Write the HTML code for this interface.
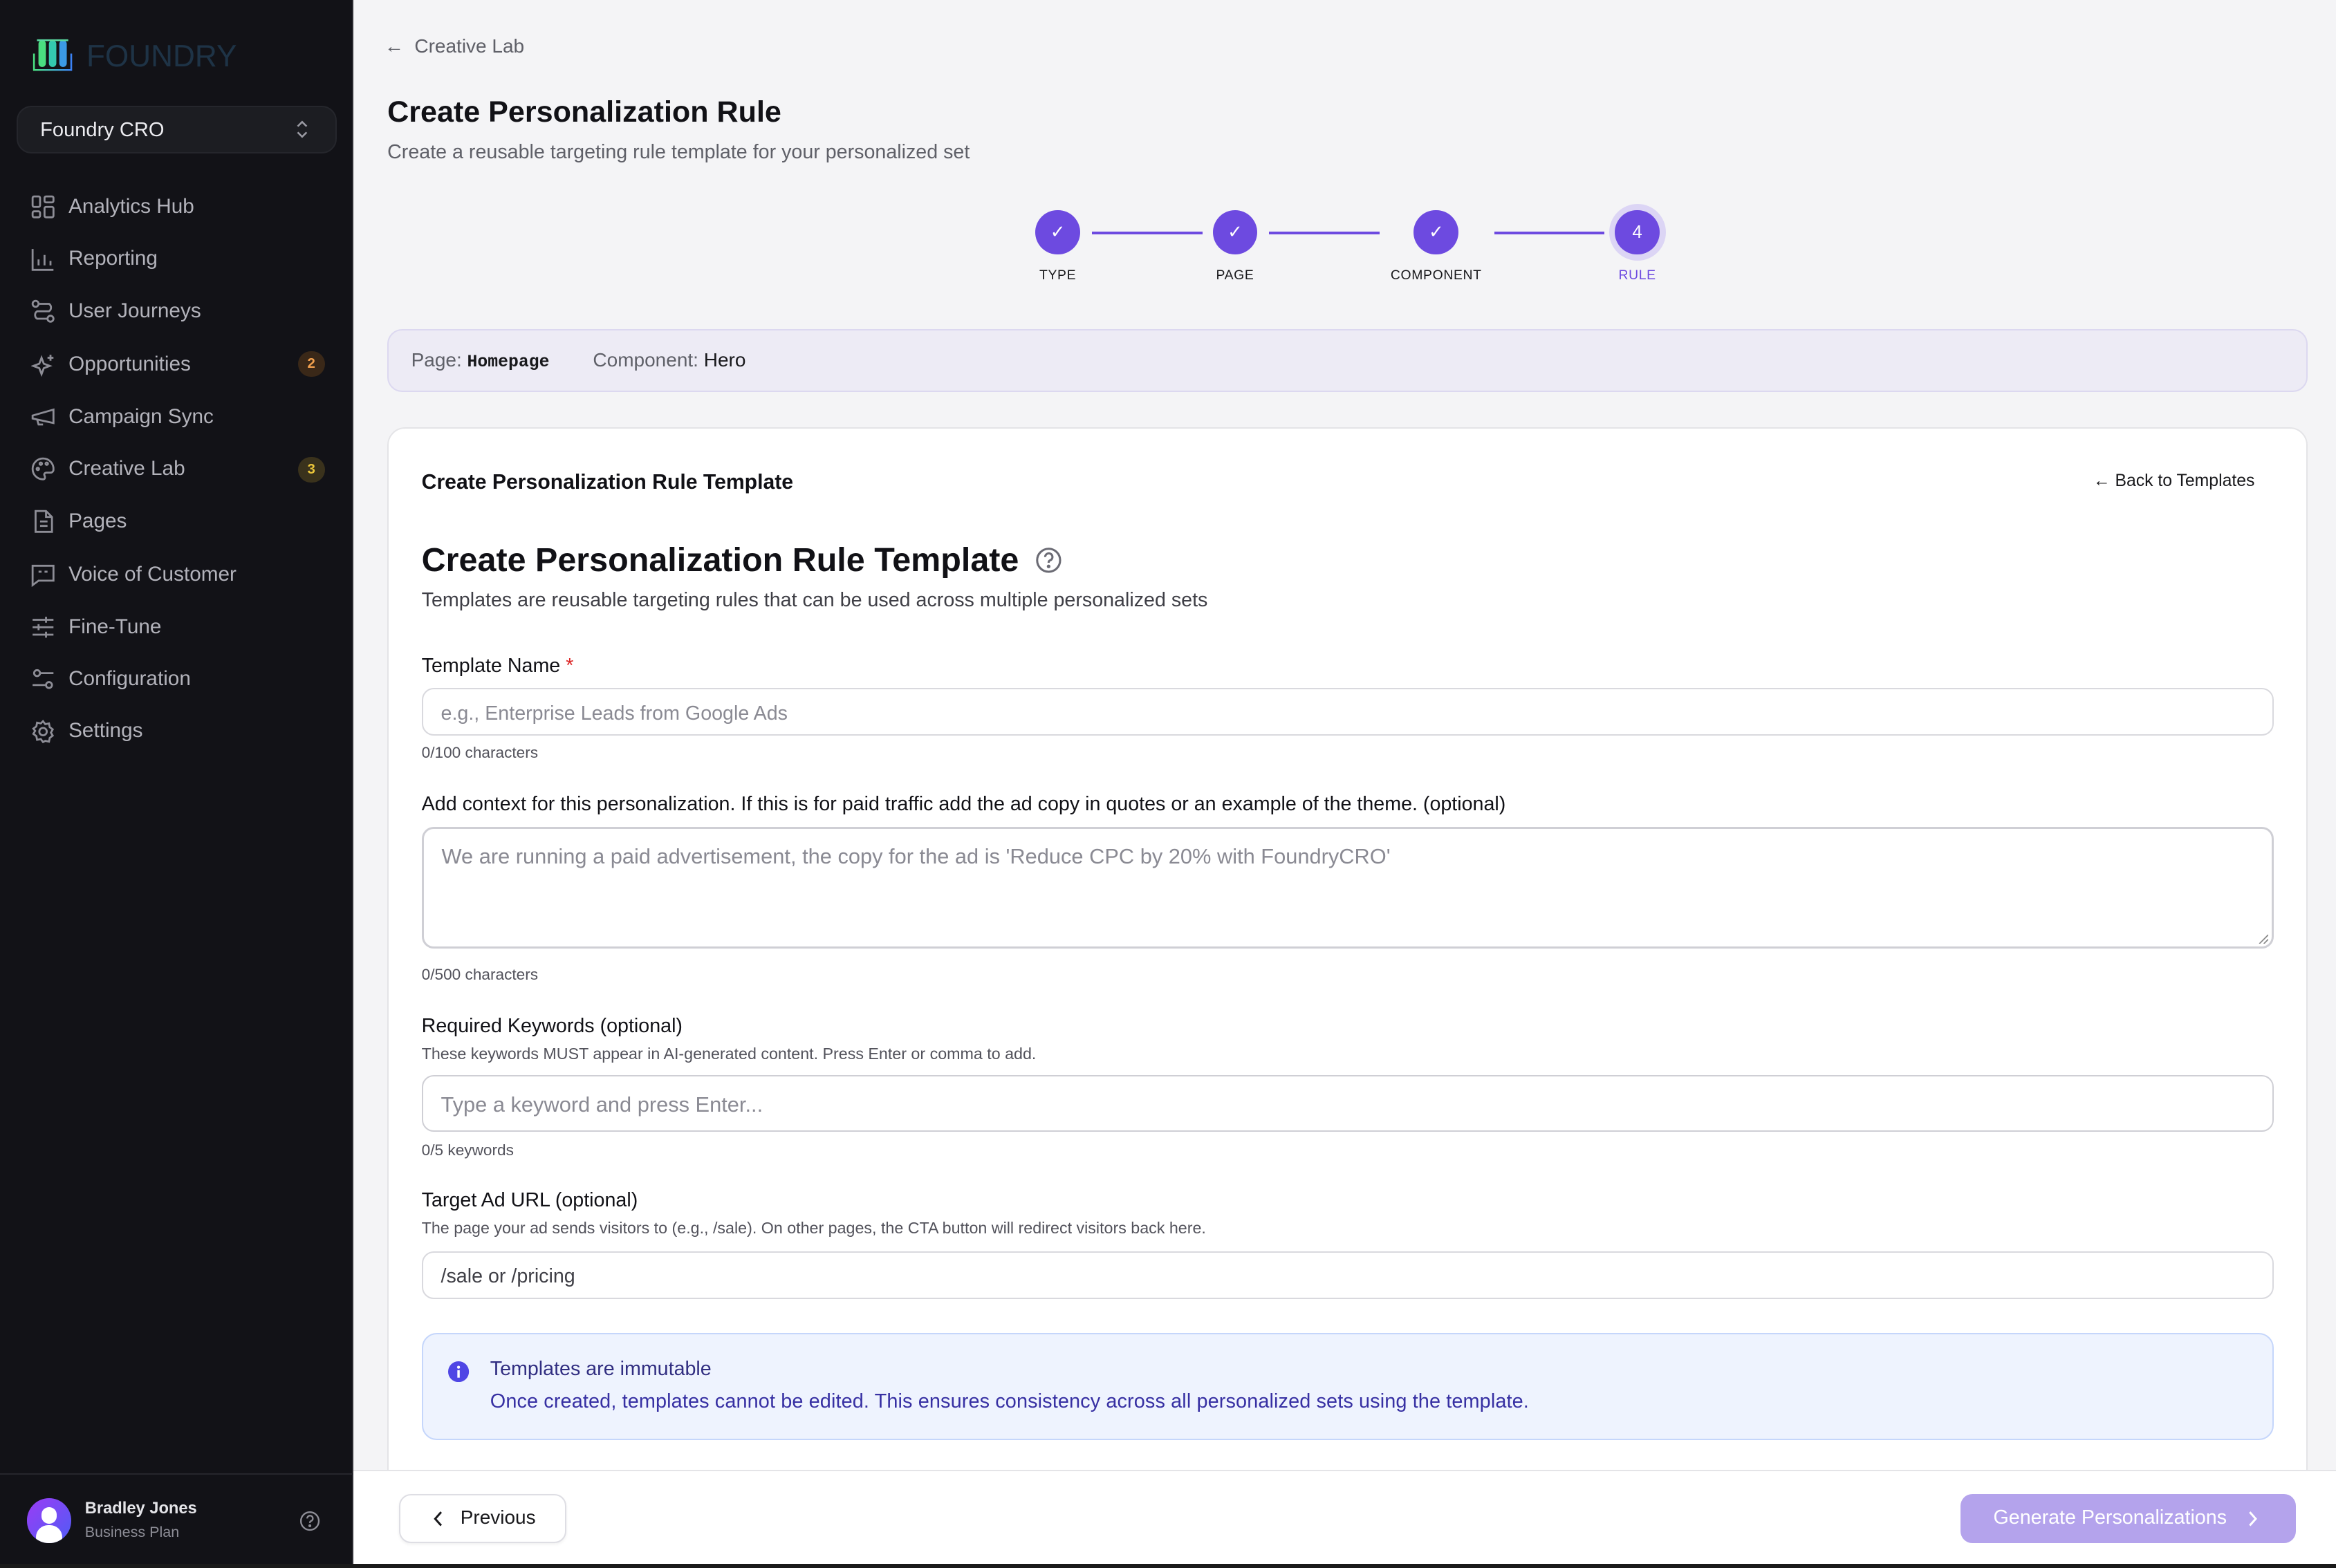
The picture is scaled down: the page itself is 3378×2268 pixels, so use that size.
<!DOCTYPE html>
<html><head><meta charset="utf-8">
<style>
*{box-sizing:border-box;margin:0;padding:0}
html,body{width:3378px;height:2268px;overflow:hidden;background:#f4f4f6}
#r{zoom:2.15434;width:1568px;height:1053px;position:relative;font-family:"Liberation Sans",sans-serif;color:#18181b;background:#f4f4f6;overflow:hidden}
.a{position:absolute;white-space:nowrap}
.sb{position:absolute;left:0;top:0;width:237px;height:1053px;background:#121217;border-right:1px solid #2a2a30}
.nav{position:absolute;left:46px;font-size:13.8px;color:#b3b3bb;line-height:18px}
.ic{position:absolute;left:21px;width:16px;height:16px}
.badge{position:absolute;left:200px;width:18px;height:17px;border-radius:9px;font-size:9.5px;text-align:center;line-height:17px;font-weight:bold}
.lbl{position:absolute;left:283px;font-size:13.3px;color:#111116;line-height:16px}
.hint{position:absolute;left:283px;font-size:10.8px;color:#52525b;line-height:13px}
.cnt{position:absolute;left:283px;font-size:10.5px;color:#52525b;line-height:13px}
.inp{position:absolute;left:283px;width:1243px;background:#fff;border:1px solid #d9d9de;border-radius:8px}
.ph{position:absolute;left:12px;color:#8a8a93}
.step{position:absolute;width:30px;height:30px;border-radius:50%;background:#6d4ae0;top:141px;color:#fff;text-align:center;line-height:30px;font-size:12px}
.sl{position:absolute;top:180px;font-size:9px;letter-spacing:.3px;line-height:10px;transform:translateX(-50%);color:#18181b}
.line{position:absolute;top:155.5px;height:2px;background:#6d4ae0}
</style></head><body><div id="r">

<div class="sb">
  <svg class="a" style="left:22px;top:26px" width="27" height="22" viewBox="0 0 27 22">
    <defs><linearGradient id="g" x1="0" x2="1"><stop offset="0" stop-color="#4ade80"/><stop offset="1" stop-color="#3b82f6"/></linearGradient></defs>
    <path d="M1 10v11h25V10" fill="none" stroke="url(#g)" stroke-width="1.2"/>
    <rect x="4" y="1" width="5" height="18" rx="2.5" fill="#4ade80"/>
    <rect x="11" y="1" width="5" height="18" rx="2.5" fill="#34c9b0"/>
    <rect x="18" y="1" width="5" height="18" rx="2.5" fill="#3b9ae6"/>
    <path d="M3 1h21" stroke="#5ad8a0" stroke-width="1.2"/>
  </svg>
  <div class="a" style="left:58px;top:26px;font-size:20.5px;color:#1e3346;line-height:24px">FOUNDRY</div>
  <div class="a" style="left:11px;top:71px;width:215px;height:32px;background:#1c1d22;border:1px solid #25262c;border-radius:10px"></div>
  <div class="a" style="left:27px;top:79px;font-size:13.5px;color:#ececf0;line-height:17px">Foundry CRO</div>
  <svg class="a" style="left:197px;top:80px" width="12" height="14" viewBox="0 0 12 14"><path d="M3 5l3-3 3 3M3 9l3 3 3-3" fill="none" stroke="#9a9aa3" stroke-width="1.2"/></svg>

  <svg class="ic" style="top:131px" viewBox="0 0 16 16" fill="none" stroke="#8d8d96" stroke-width="1.3"><rect x="1" y="1" width="5" height="7" rx="1"/><rect x="9" y="1" width="6" height="4" rx="1"/><rect x="1" y="11" width="5" height="4" rx="1"/><rect x="9" y="8" width="6" height="7" rx="1"/></svg>
  <div class="nav" style="top:130px">Analytics Hub</div>
  <svg class="ic" style="top:166px" viewBox="0 0 16 16" fill="none" stroke="#8d8d96" stroke-width="1.3"><path d="M1 1v14h14M5 12V8M9 12V5M13 12V9"/></svg>
  <div class="nav" style="top:165px">Reporting</div>
  <svg class="ic" style="top:201px" viewBox="0 0 16 16" fill="none" stroke="#8d8d96" stroke-width="1.3"><circle cx="3" cy="3" r="2"/><circle cx="13" cy="13" r="2"/><path d="M5 3h7a3 3 0 0 1 0 5H4a3 3 0 0 0 0 5h7"/></svg>
  <div class="nav" style="top:200px">User Journeys</div>
  <svg class="ic" style="top:237px" viewBox="0 0 16 16" fill="none" stroke="#8d8d96" stroke-width="1.3"><path d="M7 3l1.5 4 4 1.5-4 1.5L7 14l-1.5-4-4-1.5 4-1.5z"/><path d="M13 1v4M11 3h4"/></svg>
  <div class="nav" style="top:236px">Opportunities</div>
  <div class="badge" style="top:236px;background:#3a2818;color:#f2a04e">2</div>
  <svg class="ic" style="top:272px" viewBox="0 0 16 16" fill="none" stroke="#8d8d96" stroke-width="1.3"><path d="M1 7l14-4v9L1 9zM4 9.5L5 13h3"/></svg>
  <div class="nav" style="top:271px">Campaign Sync</div>
  <svg class="ic" style="top:307px" viewBox="0 0 16 16" fill="none" stroke="#8d8d96" stroke-width="1.3"><path d="M8 1a7 7 0 0 0 0 14c1.5 0 1.5-1.5 1-2.5s0-2 1.5-2H13a2 2 0 0 0 2-2A7 7 0 0 0 8 1z"/><circle cx="4.5" cy="8" r=".8"/><circle cx="6.5" cy="4.5" r=".8"/><circle cx="10.5" cy="4.5" r=".8"/></svg>
  <div class="nav" style="top:306px">Creative Lab</div>
  <div class="badge" style="top:307px;background:#3a321c;color:#ecc63a">3</div>
  <svg class="ic" style="top:342px" viewBox="0 0 16 16" fill="none" stroke="#8d8d96" stroke-width="1.3"><path d="M3 1h7l4 4v10H3zM10 1v4h4M6 8h5M6 11h5"/></svg>
  <div class="nav" style="top:341px">Pages</div>
  <svg class="ic" style="top:378px" viewBox="0 0 16 16" fill="none" stroke="#8d8d96" stroke-width="1.3"><path d="M1 2h14v10H5l-4 3zM5 6h2M9 6h2"/></svg>
  <div class="nav" style="top:377px">Voice of Customer</div>
  <svg class="ic" style="top:413px" viewBox="0 0 16 16" fill="none" stroke="#8d8d96" stroke-width="1.3"><path d="M1 3h14M1 8h14M1 13h14M10 1v4M5 6v4M10 11v4"/></svg>
  <div class="nav" style="top:412px">Fine-Tune</div>
  <svg class="ic" style="top:448px" viewBox="0 0 16 16" fill="none" stroke="#8d8d96" stroke-width="1.3"><circle cx="4" cy="4" r="2"/><circle cx="12" cy="12" r="2"/><path d="M6 4h9M1 12h9"/></svg>
  <div class="nav" style="top:447px">Configuration</div>
  <svg class="ic" style="top:483px" viewBox="0 0 16 16" fill="none" stroke="#8d8d96" stroke-width="1.3"><circle cx="8" cy="8" r="2.5"/><path d="M8 1l1.5 2 2.5-.5.5 2.5 2 1.5-1.2 2.2 1.2 2-2 1.5-.5 2.5-2.5-.5L8 15l-1.5-2-2.5.5-.5-2.5-2-1.5 1.2-2L1.5 6l2-1.5.5-2.5 2.5.5z"/></svg>
  <div class="nav" style="top:482px">Settings</div>

  <div class="a" style="left:0;top:989px;width:237px;height:1px;background:#26262c"></div>
  <div class="a" style="left:18px;top:1006px;width:30px;height:30px;border-radius:50%;background:linear-gradient(135deg,#9b3cf5,#4f5cf5);overflow:hidden">
    <div class="a" style="left:10px;top:6px;width:10px;height:11px;border-radius:5px;background:#fff"></div>
    <div class="a" style="left:6px;top:18px;width:18px;height:16px;border-radius:9px;background:#fff"></div>
  </div>
  <div class="a" style="left:57px;top:1006px;font-size:11px;font-weight:bold;color:#e4e4e8;line-height:14px">Bradley Jones</div>
  <div class="a" style="left:57px;top:1022px;font-size:10px;color:#8d8d96;line-height:13px">Business Plan</div>
  <svg class="a" style="left:201px;top:1014px" width="14" height="14" viewBox="0 0 14 14" fill="none" stroke="#8d8d96" stroke-width="1.1"><circle cx="7" cy="7" r="6"/><path d="M5.2 5.3a1.9 1.9 0 1 1 2.4 1.8c-.5.2-.6.6-.6 1.2"/><circle cx="7" cy="10.2" r=".4" fill="#8d8d96"/></svg>
</div>

<!-- main -->
<div class="a" style="left:258px;top:23px;font-size:13px;color:#5f6068;line-height:16px">&#8592;&nbsp; Creative Lab</div>
<div class="a" style="left:260px;top:62px;font-size:20px;font-weight:bold;color:#111116;line-height:26px">Create Personalization Rule</div>
<div class="a" style="left:260px;top:94px;font-size:13.3px;color:#5f6068;line-height:16px">Create a reusable targeting rule template for your personalized set</div>

<div class="line" style="left:733px;width:74px"></div>
<div class="line" style="left:852px;width:74px"></div>
<div class="line" style="left:1003px;width:74px"></div>
<div class="step" style="left:695px">&#10003;</div>
<div class="step" style="left:814px">&#10003;</div>
<div class="step" style="left:949px">&#10003;</div>
<div class="a" style="left:1080px;top:137px;width:38px;height:38px;border-radius:50%;background:#dcd5f5"></div>
<div class="step" style="left:1084px">4</div>
<div class="sl" style="left:710px">TYPE</div>
<div class="sl" style="left:829px">PAGE</div>
<div class="sl" style="left:964px">COMPONENT</div>
<div class="sl" style="left:1099px;color:#6d4ae0">RULE</div>

<div class="a" style="left:260px;top:221px;width:1289px;height:42px;background:#edebf5;border:1px solid #dcd8f0;border-radius:10px"></div>
<div class="a" style="left:276px;top:234px;font-size:13px;color:#5f6068;line-height:16px">Page: <span style="font-family:'Liberation Mono',monospace;font-size:11.5px;color:#18181b;font-weight:bold">Homepage</span></div>
<div class="a" style="left:398px;top:234px;font-size:13px;color:#5f6068;line-height:16px">Component: <span style="color:#18181b">Hero</span></div>

<div class="a" style="left:260px;top:287px;width:1289px;height:760px;background:#fff;border:1px solid #e4e4e7;border-radius:12px"></div>
<div class="a" style="left:283px;top:315px;font-size:14px;font-weight:600;color:#111116;line-height:18px">Create Personalization Rule Template</div>
<div class="a" style="left:1405px;top:316px;font-size:11.5px;color:#18181b;line-height:14px">&#8592; Back to Templates</div>
<div class="a" style="left:283px;top:362px;font-size:22.5px;font-weight:bold;color:#111116;line-height:28px">Create Personalization Rule Template</div>
<svg class="a" style="left:695px;top:367px" width="18" height="18" viewBox="0 0 14 14" fill="none" stroke="#6b6b74" stroke-width="1.1"><circle cx="7" cy="7" r="6"/><path d="M5.2 5.3a1.9 1.9 0 1 1 2.4 1.8c-.5.2-.6.6-.6 1.2"/><circle cx="7" cy="10.2" r=".4" fill="#6b6b74"/></svg>
<div class="a" style="left:283px;top:395px;font-size:13.3px;color:#3f3f46;line-height:16px">Templates are reusable targeting rules that can be used across multiple personalized sets</div>

<div class="lbl" style="top:439px">Template Name <span style="color:#dc2626">*</span></div>
<div class="inp" style="top:462px;height:32px"><div class="ph" style="top:8px;font-size:13.3px;line-height:16px">e.g., Enterprise Leads from Google Ads</div></div>
<div class="cnt" style="top:499px">0/100 characters</div>

<div class="lbl" style="top:532px">Add context for this personalization. If this is for paid traffic add the ad copy in quotes or an example of the theme. (optional)</div>
<div class="inp" style="top:555px;height:82px;border-width:1.5px;border-color:#cfcfd5"><div class="ph" style="top:10px;font-size:14.3px;line-height:18px">We are running a paid advertisement, the copy for the ad is 'Reduce CPC by 20% with FoundryCRO'</div>
<svg class="a" style="right:2px;bottom:2px" width="7" height="7" viewBox="0 0 7 7" stroke="#888" stroke-width=".8"><path d="M1 7L7 1M4 7l3-3"/></svg></div>
<div class="cnt" style="top:648px">0/500 characters</div>

<div class="lbl" style="top:681px">Required Keywords (optional)</div>
<div class="hint" style="top:701px">These keywords MUST appear in AI-generated content. Press Enter or comma to add.</div>
<div class="inp" style="top:722px;height:38px;border-color:#cfcfd5"><div class="ph" style="top:10px;font-size:14.3px;line-height:18px">Type a keyword and press Enter...</div></div>
<div class="cnt" style="top:766px">0/5 keywords</div>

<div class="lbl" style="top:798px">Target Ad URL (optional)</div>
<div class="hint" style="top:818px">The page your ad sends visitors to (e.g., /sale). On other pages, the CTA button will redirect visitors back here.</div>
<div class="inp" style="top:840px;height:32px"><div class="ph" style="top:8px;font-size:13.3px;line-height:16px;color:#3f3f46">/sale or /pricing</div></div>

<div class="a" style="left:283px;top:895px;width:1243px;height:72px;background:#eef3fe;border:1px solid #c5d6fb;border-radius:10px"></div>
<svg class="a" style="left:301px;top:914px" width="14" height="14" viewBox="0 0 14 14"><circle cx="7" cy="7" r="7" fill="#4f46e5"/><rect x="6.2" y="6" width="1.6" height="5" fill="#fff"/><circle cx="7" cy="4" r="1" fill="#fff"/></svg>
<div class="a" style="left:329px;top:911px;font-size:13.3px;color:#312e81;line-height:16px">Templates are immutable</div>
<div class="a" style="left:329px;top:933px;font-size:13.4px;color:#3730a3;line-height:16px;letter-spacing:.05px">Once created, templates cannot be edited. This ensures consistency across all personalized sets using the template.</div>

<div class="a" style="left:237px;top:987px;width:1331px;height:66px;background:#fff;border-top:1px solid #e4e4e7"></div>
<div class="a" style="left:268px;top:1003px;width:112px;height:33px;background:#fff;border:1px solid #dedee4;border-radius:8px;box-shadow:0 1px 2px rgba(0,0,0,.05)"></div>
<svg class="a" style="left:290px;top:1014px" width="8" height="11" viewBox="0 0 8 11"><path d="M6 1L2 5.5 6 10" fill="none" stroke="#18181b" stroke-width="1.4"/></svg>
<div class="a" style="left:309px;top:1011px;font-size:13px;color:#18181b;line-height:16px">Previous</div>
<div class="a" style="left:1316px;top:1003px;width:225px;height:33px;background:#b4a3ec;border-radius:8px"></div>
<div class="a" style="left:1338px;top:1011px;font-size:13.3px;color:#fff;line-height:16px">Generate Personalizations</div>
<svg class="a" style="left:1508px;top:1014px" width="8" height="11" viewBox="0 0 8 11"><path d="M2 1l4 4.5L2 10" fill="none" stroke="#fff" stroke-width="1.4"/></svg>
<div class="a" style="left:0;top:1050px;width:1568px;height:3px;background:#1a1a1a"></div>
</div></body></html>
